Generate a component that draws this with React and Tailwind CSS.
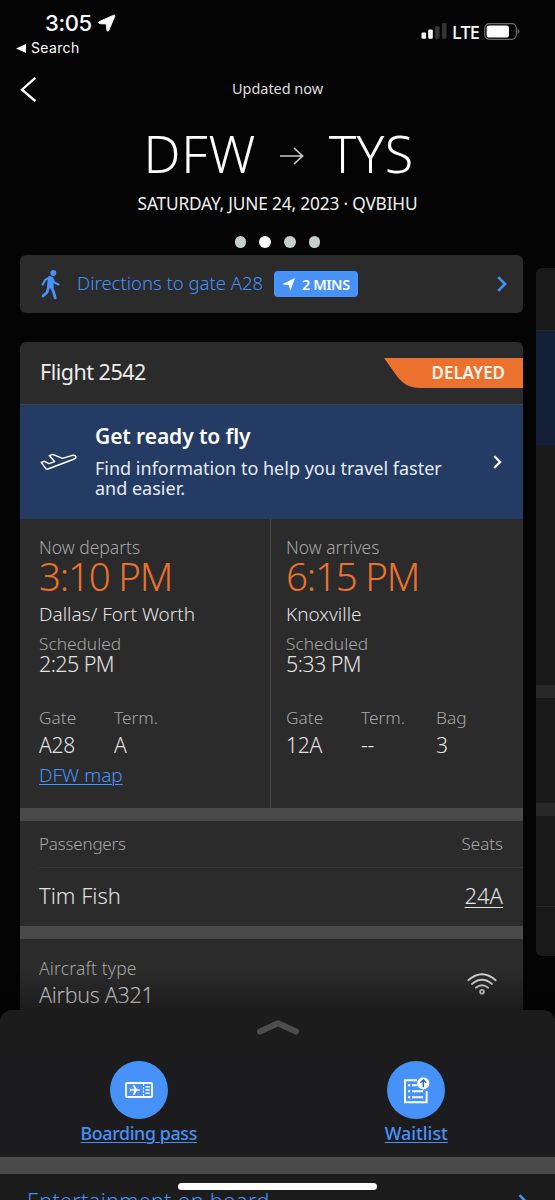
import React from "react";

function StatusBar() {
  return (
    <div className="flex h-[60px] shrink-0 justify-between pl-4 pr-[35px] font-['Inter','Noto_Sans',sans-serif] text-white">
      <div className="flex flex-col pt-[11px]">
        <div className="flex h-6 items-center gap-[6px] pl-[29px]">
          <span className="text-[22px] font-medium leading-6 tracking-[-0.4px]">3:05</span>
          <svg className="h-[18px] w-[18px]" viewBox="0 0 18 18" fill="white">
            <path d="M1.2 7.6 15.6 1.2q1.7-.6 1.2 1.1L10.8 16.4q-1.2 1.9-2-.2L8.2 10 2 9.7q-2.4-.6-.8-2.1Z" stroke="white" strokeWidth="0.8" />
          </svg>
        </div>
        <div className="mt-[3px] flex h-5 items-center gap-[5px]">
          <svg className="h-[9px] w-[10px]" viewBox="0 0 10 9" fill="white">
            <path d="M0 4.5 10 0v9Z" />
          </svg>
          <span className="text-[14px] font-normal leading-5 tracking-[0.35px]">Search</span>
        </div>
      </div>
      <div className="flex h-[62px] items-center">
        <svg className="h-4 w-[26px]" viewBox="0 0 26 16">
          <rect x="0.5" y="9.5" width="4.6" height="6.3" rx="1.2" fill="white" />
          <rect x="7.2" y="6.5" width="4.6" height="9.3" rx="1.2" fill="white" />
          <rect x="14" y="3.3" width="4.6" height="12.5" rx="1.2" fill="#343434" />
          <rect x="20.9" y="0" width="4.6" height="15.8" rx="1.2" fill="#343434" />
        </svg>
        <span className="ml-[5px] mt-px w-[28px] font-['Noto_Sans',sans-serif] text-[18px] font-medium leading-6 tracking-[-0.8px]">LTE</span>
        <svg className="ml-[4px] h-[17px] w-9" viewBox="0 0 36 17">
          <rect x="0.7" y="0.7" width="31.6" height="15.6" rx="4.5" fill="none" stroke="#6d6d6d" strokeWidth="1.2" />
          <rect x="2.6" y="2.5" width="22.4" height="12" rx="2.8" fill="white" />
          <path d="M33.6 6q1.8.6 1.8 2.5t-1.8 2.5Z" fill="#6d6d6d" />
        </svg>
      </div>
    </div>
  );
}

function Header() {
  return (
    <header className="flex shrink-0 flex-col items-center">
      <div className="grid h-14 w-full grid-cols-[1fr_auto_1fr] items-center px-5">
        <svg className="mt-[2px] h-[26px] w-4" viewBox="0 0 16 26" fill="none" stroke="white" strokeWidth="2.3">
          <path d="M15.3 1.8 2 13.7 15.3 25" />
        </svg>
        <span className="text-[14.5px] font-normal leading-5 tracking-[-0.05px] text-[#dedede]">Updated now</span>
      </div>
      <div className="mt-[4px] flex h-[66px] w-[270px] items-center justify-between text-[52px] font-light leading-[66px] text-white">
        <span className="pl-px tracking-[0.8px]">DFW</span>
        <svg className="mt-[5px] h-[18px] w-6" viewBox="0 0 24 18" fill="none" stroke="#c8c8c8" strokeWidth="1.7">
          <path d="M0 9h22M14 1l8.6 8L14 17" />
        </svg>
        <span className="-mr-[1px] tracking-[0.3px]">TYS</span>
      </div>
      <div className="mt-[6px] h-6 whitespace-nowrap text-[17.3px] font-normal leading-6 tracking-[-0.17px] text-[#f0f0f0]">
        SATURDAY, JUNE 24, 2023 · QVBIHU
      </div>
      <div className="mt-[20px] flex h-3 items-center gap-[13px]">
        <i className="h-[11.6px] w-[11.6px] rounded-full bg-[#c3cfcc]" />
        <i className="h-[11.6px] w-[11.6px] rounded-full bg-white" />
        <i className="h-[11.6px] w-[11.6px] rounded-full bg-[#c3cfcc]" />
        <i className="h-[11.6px] w-[11.6px] rounded-full bg-[#c3cfcc]" />
      </div>
    </header>
  );
}

function Chevron({ className }) {
  return (
    <svg className={className} viewBox="0 0 10 16" fill="none" stroke="currentColor" strokeWidth="2.6">
      <path d="M1.2 1.2 8 8l-6.8 6.8" />
    </svg>
  );
}

function Directions() {
  return (
    <div className="flex h-[58px] items-center rounded-[6px] bg-[#2b2b2b] pl-5 pr-4">
      <svg className="mt-[2px] h-[30px] w-[20px]" viewBox="0 0 20 30" fill="none" stroke="#4692f8" strokeLinecap="round" strokeLinejoin="round">
        <circle cx="13.3" cy="3" r="2.9" fill="#4692f8" stroke="none" />
        <path d="M9.5 7.6 11.7 8 12.3 17 8.4 16.6Z" fill="#4692f8" strokeWidth="3" />
        <path d="M9.3 7.6 5.2 9.9 2.7 14.6M12.3 8.4 14.3 12.6 18.5 14.4" strokeWidth="2.2" />
        <path d="M11.5 17 13.6 22 15.2 27.8M8.2 18.5 7 22.4 3 26" strokeWidth="2.9" />
      </svg>
      <span className="-mt-[2px] ml-[17px] w-[187px] whitespace-nowrap text-[18.5px] font-light leading-6 text-[#4692f8]">Directions to gate A28</span>
      <span className="ml-[10px] flex h-[26px] w-[84px] items-center rounded-[4px] bg-[#4692f8] pl-[8px] text-white">
        <svg className="h-[13px] w-[13px]" viewBox="0 0 13 13" fill="white">
          <path d="M0 6.2 13 0 8.3 13 6.9 7.3Z" />
        </svg>
        <span className="-mt-px ml-[7px] whitespace-nowrap text-[14.5px] font-semibold leading-5 tracking-[-0.45px]">2 MINS</span>
      </span>
      <Chevron className="ml-auto h-4 w-[10px] text-[#4692f8]" />
    </div>
  );
}

function GetReady() {
  return (
    <div className="flex h-[115px] items-center border-t border-[#3d4450] bg-[#243b63] pl-5 pr-[21px] text-white">
      <svg className="h-[18px] w-[38px] shrink-0" viewBox="0 0 38 18" fill="none" stroke="white" strokeWidth="1.5" strokeLinejoin="round">
        <path d="M1.3 9.4 4.4 8.3 9 10.6 14.6 8.6 9.3 2.6 12.7 1.4 22.5 5.4 32.3 2.4Q35.6 1.9 36 3.8 36.2 5 33.7 6.2L8.6 15.7Q6.6 16.5 5.6 15.4Z" />
      </svg>
      <div className="-mt-[5px] ml-[17px] flex-1 whitespace-nowrap">
        <div className="text-[21px] font-semibold leading-7 tracking-[-0.1px]">Get ready to fly</div>
        <div className="mt-2 text-[18px] font-normal leading-5 text-[#e3ebf7]">
          Find information to help you travel faster
          <br />
          and easier.
        </div>
      </div>
      <Chevron className="h-[14px] w-[9px]" />
    </div>
  );
}

function Field({ label, value, className }) {
  return (
    <div className={className}>
      <div className="h-6 text-[17.3px] font-light leading-6 text-[#a6a6a6]">{label}</div>
      <div className="mt-[3px] h-[25px] text-[21px] font-light leading-6 tracking-[-0.3px] text-[#e2e2e2]">{value}</div>
    </div>
  );
}

function Leg({ label, time, city, scheduled, className, children }) {
  return (
    <div className={className}>
      <div className="h-5 text-[17.5px] font-light leading-5 text-[#a6a6a6]">{label}</div>
      <div className="-mt-px h-[41px] whitespace-nowrap text-[38.5px] font-light leading-10 tracking-[-1.2px] text-[#eb722e]">{time}</div>
      <div className="mt-[5px] h-[25px] text-[19px] font-light leading-6 text-[#e2e2e2]">{city}</div>
      <div className="mt-[7px] h-5 text-[17.3px] font-light leading-5 text-[#a6a6a6]">{scheduled[0]}</div>
      <div className="h-5 text-[21.5px] font-light leading-5 tracking-[-0.6px] text-[#e2e2e2]">{scheduled[1]}</div>
      <div className="mt-8 flex">{children}</div>
    </div>
  );
}

function FlightCard() {
  return (
    <section className="mt-[29px] flex flex-col overflow-hidden rounded-t-[6px] bg-[#2b2b2b]">
      <div className="flex h-[62px] items-center justify-between pl-5">
        <span className="-mt-[3px] text-[21.5px] font-normal leading-7 tracking-[-0.5px] text-[#ececec]">Flight 2542</span>
        <div className="relative flex h-[30px] w-[139px] items-center justify-end pr-[18px]">
          <svg className="absolute inset-0 h-full w-full" viewBox="0 0 139 30">
            <path d="M0 0h139v30H36Q21 30 12.5 17.5Z" fill="#eb722e" />
          </svg>
          <span className="relative text-[17px] font-semibold leading-6 tracking-[-0.05px] text-[#fff4e8]">DELAYED</span>
        </div>
      </div>
      <GetReady />
      <div className="flex h-[289px]">
        <Leg label="Now departs" time="3:10 PM" city="Dallas/ Fort Worth" scheduled={["Scheduled", "2:25 PM"]} className="w-[251px] border-r border-[#484848] pl-[19px] pt-[18px]">
          <div>
            <div className="flex">
              <Field label="Gate" value="A28" className="w-[75px]" />
              <Field label="Term." value="A" />
            </div>
            <div className="mt-[5px] text-[19px] font-light leading-6 text-[#4692f8] underline decoration-1 underline-offset-2">DFW map</div>
          </div>
        </Leg>
        <Leg label="Now arrives" time="6:15 PM" city="Knoxville" scheduled={["Scheduled", "5:33 PM"]} className="pl-[15px] pt-[18px]">
          <Field label="Gate" value="12A" className="w-[75px]" />
          <Field label="Term." value="--" className="w-[75px]" />
          <Field label="Bag" value="3" />
        </Leg>
      </div>
      <div className="h-[13px] bg-[#4a4a4a]" />
      <div className="h-[105px] pl-[19px]">
        <div className="flex h-[47px] items-center justify-between border-b border-[#363636] pr-5 text-[17px] font-light leading-6 text-[#a6a6a6]">
          <span className="tracking-[-0.2px]">Passengers</span>
          <span>Seats</span>
        </div>
        <div className="flex h-[54px] items-center justify-between pr-5 text-[22px] font-light leading-7 text-[#e2e2e2]">
          <span>Tim Fish</span>
          <span className="underline decoration-1 underline-offset-[3px]">24A</span>
        </div>
      </div>
      <div className="h-[13px] bg-[#4a4a4a]" />
      <div className="flex h-[90px] justify-between pl-[19px] pr-[26px]">
        <div className="pt-[17px]">
          <div className="h-6 text-[17.5px] font-light leading-6 tracking-[0.15px] text-[#a6a6a6]">Aircraft type</div>
          <div className="mt-px h-7 text-[21.5px] font-light leading-7 tracking-[-0.3px] text-[#e2e2e2]">Airbus A321</div>
        </div>
        <svg className="mt-[34px] h-[22px] w-[30px]" viewBox="0 0 30 22" fill="none" stroke="#d8d8d8" strokeWidth="1.8" strokeLinecap="round">
          <path d="M1.3 7.2Q15-4.8 28.7 7.2M5 11Q15 2.5 25 11M8.8 14.7Q15 9.7 21.2 14.7" />
          <circle cx="15" cy="18.7" r="1.9" />
        </svg>
      </div>
    </section>
  );
}

function NextCard() {
  return (
    <div className="mt-[13px] h-[688px] w-10 shrink-0 overflow-hidden rounded-[6px] bg-[#191919]">
      <div className="h-[62px]" />
      <div className="h-[115px] border-t border-[#20252e] bg-[#131f36]" />
      <div className="h-[240px]" />
      <div className="h-[13px] bg-[#292929]" />
      <div className="h-[105px]" />
      <div className="h-[13px] bg-[#292929]" />
      <div className="h-[91px] border-b border-[#282828]" />
    </div>
  );
}

function BottomSheet() {
  return (
    <div className="flex h-[190px] shrink-0 flex-col overflow-hidden rounded-t-[12px] bg-[#1c1c1c]">
      <div className="flex h-[41px] shrink-0 justify-center pt-[9px]">
        <svg className="h-4 w-[44px]" viewBox="0 0 44 16" fill="none" stroke="#4d4d4d" strokeWidth="6" strokeLinecap="round" strokeLinejoin="round">
          <path d="M4 12.5 22 4.2 40 12.5" />
        </svg>
      </div>
      <div className="grid h-[106px] shrink-0 grid-cols-2 bg-[#1c1c1e] pt-[10px] text-[17.8px] font-medium leading-7 text-[#4692f8]">
        <div className="flex flex-col items-center">
          <div className="flex h-[58px] w-[58px] shrink-0 items-center justify-center rounded-full bg-[#4692f8]">
            <svg className="h-4 w-7" viewBox="0 0 28 16" fill="none" stroke="white">
              <rect x="1" y="1" width="26" height="14" rx="1" strokeWidth="1.8" />
              <path d="M18.5 2v12" strokeWidth="1.2" strokeDasharray="2 1.3" />
              <path d="M20.5 4.7h4.3M20.5 8h4.3M20.5 11.3h4.3" strokeWidth="1.5" />
              <path d="M4.5 5.3 6 7.3H9L8 3h1.3l2.7 4.3h2.6q1.2.7 0 1.4H12L9.3 13H8L9 8.7H6L4.5 10.7 5.3 8Z" fill="white" stroke="none" />
            </svg>
          </div>
          <span className="tracking-[-0.35px] underline decoration-1 underline-offset-2">Boarding pass</span>
        </div>
        <div className="flex flex-col items-center">
          <div className="flex h-[58px] w-[58px] shrink-0 items-center justify-center rounded-full bg-[#4692f8]">
            <svg className="h-[27px] w-[27px]" viewBox="0 0 27 27" fill="none" stroke="white">
              <path d="M14 3.3H2v21.9h21.6V14" strokeWidth="1.9" />
              <path d="M5 8.3h2.2M5 14.3h2.2M5 20.2h2.2M9 8.3h5.5M9 14.3h11.2M9 20.2h11.2" strokeWidth="1.9" />
              <circle cx="20.3" cy="6.3" r="6.1" fill="white" stroke="none" />
              <path d="M20.3 10.3V3M17.4 5.8 20.3 2.9 23.2 5.8" stroke="#2f62ad" strokeWidth="1.4" />
            </svg>
          </div>
          <span className="underline decoration-1 underline-offset-2">Waitlist</span>
        </div>
      </div>
      <div className="h-[17px] shrink-0 bg-[#4a4a4a]" />
      <div className="relative flex h-[54px] shrink-0 items-center justify-between pl-[27px] pr-[27px] text-[#4692f8]">
        <span className="whitespace-nowrap text-[21.5px] font-light leading-7 tracking-[0.35px]">Entertainment on board</span>
        <Chevron className="h-[15px] w-[10px]" />
        <div className="absolute left-[178px] top-[9px] h-[7px] w-[199px] rounded-full bg-white" />
      </div>
    </div>
  );
}

export default function App() {
  return (
    <div className="flex h-[1200px] w-[555px] flex-col overflow-hidden bg-[#040404] font-['Noto_Sans',sans-serif]">
      <StatusBar />
      <Header />
      <main className="relative mt-[7px] flex min-h-0 flex-1 items-start gap-[13px] overflow-hidden pl-5">
        <div className="w-[503px] shrink-0">
          <Directions />
          <FlightCard />
        </div>
        <NextCard />
        <div className="absolute inset-x-0 bottom-0 h-10 bg-gradient-to-b from-transparent to-black/35" />
      </main>
      <BottomSheet />
    </div>
  );
}
